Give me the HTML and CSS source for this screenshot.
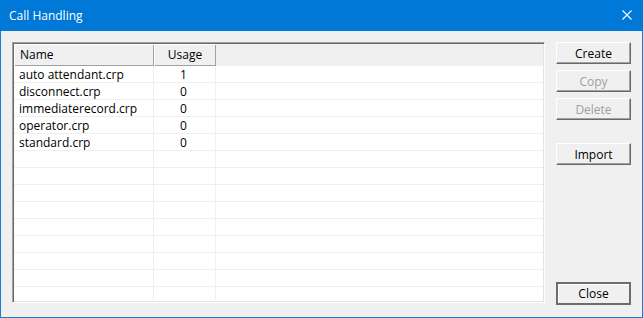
FILE: index.html
```html
<!DOCTYPE html>
<html>
<head>
<meta charset="utf-8">
<link rel="stylesheet" href="styles.css">
</head>
<body>
<div class="window">
  <div class="titlebar">
    <span class="title">Call Handling</span>
    <svg class="close-x" width="10" height="10" viewBox="0 0 10 10"><path d="M0.5 0.5 L9.5 9.5 M9.5 0.5 L0.5 9.5" stroke="#fff" stroke-width="1.1" fill="none"/></svg>
  </div>
  <div class="client">
    <div class="listview">
      <div class="header">
        <div class="hcell col-name">Name</div>
        <div class="hcell col-usage">Usage</div>
        <div class="hcell col-rest"></div>
      </div>
      <div class="rows">
        <div class="row"><div class="cell col-name">auto attendant.crp</div><div class="cell col-usage">1</div><div class="cell col-rest"></div></div>
        <div class="row"><div class="cell col-name">disconnect.crp</div><div class="cell col-usage">0</div><div class="cell col-rest"></div></div>
        <div class="row"><div class="cell col-name">immediaterecord.crp</div><div class="cell col-usage">0</div><div class="cell col-rest"></div></div>
        <div class="row"><div class="cell col-name">operator.crp</div><div class="cell col-usage">0</div><div class="cell col-rest"></div></div>
        <div class="row"><div class="cell col-name">standard.crp</div><div class="cell col-usage">0</div><div class="cell col-rest"></div></div>
        <div class="row"><div class="cell col-name"></div><div class="cell col-usage"></div><div class="cell col-rest"></div></div>
        <div class="row"><div class="cell col-name"></div><div class="cell col-usage"></div><div class="cell col-rest"></div></div>
        <div class="row"><div class="cell col-name"></div><div class="cell col-usage"></div><div class="cell col-rest"></div></div>
        <div class="row"><div class="cell col-name"></div><div class="cell col-usage"></div><div class="cell col-rest"></div></div>
        <div class="row"><div class="cell col-name"></div><div class="cell col-usage"></div><div class="cell col-rest"></div></div>
        <div class="row"><div class="cell col-name"></div><div class="cell col-usage"></div><div class="cell col-rest"></div></div>
        <div class="row"><div class="cell col-name"></div><div class="cell col-usage"></div><div class="cell col-rest"></div></div>
        <div class="row"><div class="cell col-name"></div><div class="cell col-usage"></div><div class="cell col-rest"></div></div>
        <div class="row last"><div class="cell col-name"></div><div class="cell col-usage"></div><div class="cell col-rest"></div></div>
      </div>
    </div>
    <div class="buttons">
      <button class="btn">Create</button>
      <button class="btn" disabled>Copy</button>
      <button class="btn" disabled>Delete</button>
      <button class="btn import">Import</button>
      <div class="spacer"></div>
      <button class="btn default">Close</button>
    </div>
  </div>
</div>
</body>
</html>
```
FILE: styles.css
```css
* { box-sizing: border-box; }
html, body { margin: 0; padding: 0; background: #f0f0f0; }
body {
  font-family: "Open Sans", "Noto Sans", "Liberation Sans", sans-serif;
  font-size: 12px;
  color: #000;
}
.window {
  width: 643px;
  height: 318px;
  display: flex;
  flex-direction: column;
  border: 1px solid #1a7bd0;
  border-top: none;
  background: #f0f0f0;
}
.titlebar {
  height: 31px;
  margin: 0 -1px;
  background: #0078d7;
  display: flex;
  align-items: center;
  justify-content: space-between;
  padding: 0 11px 0 9px;
  flex-shrink: 0;
}
.title { color: #fff; font-size: 12px; line-height: 16px; }
.close-x { display: block; margin-top: -1px; }
.client {
  flex: 1;
  display: flex;
  padding: 11px 11px 12px 11px;
  gap: 11px;
}
.listview {
  width: 533px;
  height: 261px;
  border-style: solid;
  border-width: 1px;
  border-color: #a0a0a0 #ffffff #ffffff #a0a0a0;
  display: flex;
  flex-direction: column;
  background: #fff;
  overflow: hidden;
  box-shadow: inset 1px 1px 0 #696969, inset -1px -1px 0 #e3e3e3;
  padding: 1px;
}
.header {
  display: flex;
  height: 22px;
  flex-shrink: 0;
  background: #f0f0f0;
}
.hcell {
  line-height: 22px;
  height: 22px;
  box-shadow: inset 1px 1px 0 #fff, inset -1px -1px 0 #a0a0a0;
}
.hcell.col-name { padding-left: 6px; }
.hcell.col-usage { text-align: center; }
.hcell.col-rest { box-shadow: none; }
.col-name { width: 140px; }
.col-usage { width: 62px; }
.col-rest { flex: 1; }
.rows { display: flex; flex-direction: column; }
.row {
  display: flex;
  height: 17px;
  border-bottom: 1px solid #efefef;
}
.cell {
  line-height: 16px;
  height: 16px;
  padding-top: 1px;
  border-right: 1px solid #efefef;
  white-space: nowrap;
}
.cell.col-name { padding-left: 5px; }
.cell.col-usage { text-align: center; padding-right: 2px; }
.cell.col-rest { border-right: none; }
.buttons {
  width: 75px;
  display: flex;
  flex-direction: column;
}
.btn {
  width: 75px;
  height: 22px;
  margin: 0 0 6px 0;
  padding: 1px 0 0 0;
  font: inherit;
  color: #000;
  background: #f0f0f0;
  border-style: solid;
  border-width: 1px;
  border-color: #ffffff #696969 #696969 #ffffff;
  box-shadow: inset -1px -1px 0 #a0a0a0;
  line-height: 18px;
}
.btn:disabled { color: #a0a0a0; }
.btn.import { margin-top: 17px; }
.spacer { flex: 1; }
.btn.default {
  margin: 0;
  height: 23px;
  padding-top: 1px;
  border: 2px solid #6d6d6d;
  box-shadow: inset 1px 1px 0 #fff;
}
```
